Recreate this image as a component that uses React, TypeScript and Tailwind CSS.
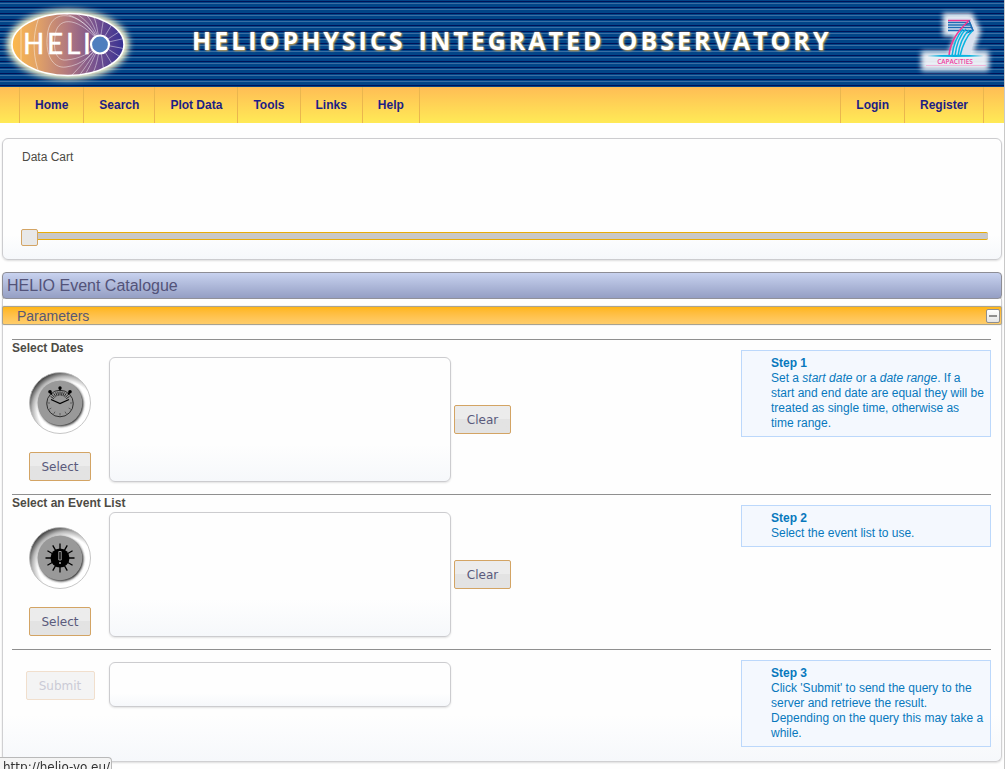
import React, { useState } from "react";

const GRADIENT_BUTTON =
  "rounded-xs border border-[#d3a464] bg-linear-to-b from-[#ececec] from-50% to-[#e3e3e3] to-50% font-['DejaVu_Sans',sans-serif] text-xs text-[#5a5a7c]";
const FIELD =
  "block w-[342px] resize-none rounded-md border border-[#cccccf] bg-linear-to-b from-[#fefefe] from-70% to-[#f6f8fb] shadow-[0_1px_2px_#e2e2e2] outline-none";

function HelioLogo() {
  const lines = [
    "M21 12V74", "M41 12C32 30 32 56 40 74",
    "M100 43C88 16 54 2 48 30C44 52 52 68 66 66C82 64 92 54 100 43",
    "M100 43C86 22 62 12 56 30C52 48 56 60 66 59C80 58 90 52 100 43",
    "M100 43C90 26 80 16 62 12", "M100 43C94 28 88 20 74 11",
    "M100 43C96 30 92 18 84 12", "M100 43C97 30 97 20 92 13",
    "M100 43C101 30 103 24 104 14", "M100 43L114 20", "M100 43L122 29", "M100 43L126 37",
    "M100 43L126 48", "M100 43L122 57", "M100 43L114 66", "M100 43L104 72",
    "M100 43C98 58 96 66 92 74", "M100 43C94 56 90 66 84 75",
    "M100 43C92 56 86 66 78 76", "M100 43C90 54 82 64 70 76",
  ];
  return (
    <svg viewBox="0 0 136 86" className="h-[86px] w-[136px]" role="img" aria-label="HELIO">
      <defs>
        <linearGradient id="sun">
          <stop offset="0" stopColor="#fdb94a" />
          <stop offset=".22" stopColor="#e3a366" />
          <stop offset=".5" stopColor="#b1787f" />
          <stop offset=".75" stopColor="#74508f" />
          <stop offset="1" stopColor="#353093" />
        </linearGradient>
        <filter id="halo" x="-20%" y="-30%" width="140%" height="160%">
          <feGaussianBlur stdDeviation="3" />
        </filter>
        <clipPath id="oval"><ellipse cx="68" cy="43.500" rx="56" ry="31" /></clipPath>
      </defs>
      <ellipse cx="68" cy="43.500" rx="61" ry="35" fill="#fffbd0" filter="url(#halo)" />
      <ellipse cx="68" cy="43.500" rx="56" ry="31" fill="url(#sun)" stroke="#fff" strokeWidth="1.600" />
      <g clipPath="url(#oval)" fill="none" stroke="#fff" strokeOpacity=".5" strokeWidth=".9">
        {lines.map((d) => <path key={d} d={d} />)}
      </g>
      <text x="23 47 66 83" y="53" fontFamily="Lato, sans-serif" fontSize="28" fill="#fff" stroke="#fff" strokeWidth=".4">HELI</text>
      <circle cx="100" cy="43.500" r="9" fill="#4f7fbe" stroke="#fff" strokeWidth="2.200" />
    </svg>
  );
}

function CapacitiesLogo() {
  return (
    <svg viewBox="0 0 80 78" className="h-[78px] w-20" role="img" aria-label="Capacities">
      <defs>
        <filter id="mist" x="-30%" y="-30%" width="160%" height="160%">
          <feGaussianBlur stdDeviation="2.500" />
        </filter>
      </defs>
      <g fill="#fff" opacity=".9" filter="url(#mist)">
        <path d="M28 8H57L66 26L57 50H32L40 31H28Z" />
        <rect x="6" y="46" width="68" height="20" rx="3" />
      </g>
      <path d="M33 13H57L62 24L55 50H36L44 29H33Z" fill="#d9e1ef" />
      <g fill="none">
        <path d="M33 17.500H53M33 20H55M33 22.500H57M33 25.500H58" stroke="#1d6db5" strokeWidth="1.500" />
        <path d="M49 20L55 18L58 25.500L51 28" stroke="#1d6db5" strokeWidth="1.400" />
        <path d="M48 24C41 32 38 42 37 51M51 24C43 32 41 42 40 51M54 25C46 33 44 42 43 51M58 25C50 33 47 42 45 51" stroke="#09b4e0" strokeWidth="1.500" />
        <path d="M33 15.500H54C43 26 35 36 34 51" stroke="#ee3a94" strokeWidth="1.600" />
        <path d="M54 15.500L58 25.500" stroke="#1d6db5" strokeWidth="1.300" />
      </g>
      <path d="M12 51Q40 48.500 69 51Q40 53 12 51Z" fill="#09b4e0" />
      <text x="40" y="58.500" textAnchor="middle" fontFamily="Open Sans, sans-serif" fontSize="6.500" fontWeight="600" fill="#f03ca0">CAPACITIES</text>
      <path d="M11 60.500H71" stroke="#f5a7d2" strokeWidth=".8" />
    </svg>
  );
}

function Dial({ id, children }: { id: string; children: React.ReactNode }) {
  return (
    <svg viewBox="0 0 64 64" className="size-16" aria-hidden="true">
      <defs>
        <radialGradient id={id + "-rim"} cx=".6" cy=".62" r=".66">
          <stop offset=".7" stopColor="#fff" />
          <stop offset=".84" stopColor="#b5b5b5" />
          <stop offset="1" stopColor="#303030" />
        </radialGradient>
        <filter id={id + "-blur"} x="-20%" y="-20%" width="140%" height="140%"><feGaussianBlur stdDeviation="1.200" /></filter>
      </defs>
      <circle cx="32" cy="32" r="30.500" fill={"url(#" + id + "-rim)"} stroke="#b8b8b8" strokeWidth=".8" />
      <circle cx="33" cy="33" r="22.500" fill="#333" filter={"url(#" + id + "-blur)"} />
      <circle cx="32" cy="32" r="22.300" fill="#999" />
      {children}
    </svg>
  );
}

const spokes = (count: number, from: number, to: number, start = 0, step = 360 / count) =>
  Array.from({ length: count }, (_, i) => {
    const a = ((start + i * step) * Math.PI) / 180;
    return `M${32 + from * Math.cos(a)} ${32 + from * Math.sin(a)}L${32 + to * Math.cos(a)} ${32 + to * Math.sin(a)}`;
  }).join("");

function ClockDial() {
  return (
    <Dial id="clock">
      <circle cx="32" cy="32.500" r="13.300" fill="none" stroke="#222" strokeWidth=".9" />
      <path d={spokes(7, 10, 12.5, 0, 30)} stroke="#333" strokeWidth=".6" />
      <path d={spokes(11, 7.5, 11.5, -145, 11)} stroke="#111" strokeWidth=".8" />
      <path d="M23 28.500L32 32.500L41 28.500" fill="none" stroke="#000" strokeWidth="1.300" />
      <path d="M32 17V19.500M22 21L24 23.500M42 21L40 23.500" stroke="#000" strokeWidth="1.500" />
      <circle cx="32" cy="17" r="1.700" /><circle cx="22" cy="20.800" r="1.800" /><circle cx="42" cy="20.800" r="1.800" />
    </Dial>
  );
}

function EventDial() {
  return (
    <Dial id="event">
      <path d={spokes(12, 8, 14.5)} stroke="#000" strokeWidth="1.300" />
      <circle cx="32" cy="32" r="9.500" />
      <path d="M30.800 25.500H33.200V34H30.800Z" fill="#000" stroke="#aaa" strokeWidth=".9" />
      <circle cx="32" cy="37" r="1" fill="#aaa" />
    </Dial>
  );
}

function NavLink({ children, first }: { children: string; first?: boolean }) {
  return (
    <a
      href="#"
      className={"flex items-center border-r border-[#eab64e] px-[15px] pb-px " + (first ? "border-l" : "")}
    >
      {children}
    </a>
  );
}

function Step({ title, children }: { title: string; children: React.ReactNode }) {
  return (
    <aside className="mt-[10px] ml-auto w-[250px] self-start border border-[#bcd8fb] bg-[#f4f8fe] py-[5px] pr-[5px] pl-[29px] leading-[15px] text-[#0878bd]">
      <h3 className="font-bold">{title}</h3>
      <p>{children}</p>
    </aside>
  );
}

function Picker({ title, id, icon, children }: { title: string; id: string; icon: React.ReactNode; children: React.ReactNode }) {
  const [value, setValue] = useState("");
  return (
    <section className="flex border-t border-[#8f8f8f] pb-3">
      <div>
        <label htmlFor={id} className="block leading-[17px] font-bold text-[#4d4b45]">{title}</label>
        <div className="flex">
          <div className="mr-px flex w-24 flex-col items-center pt-[14px]">
            {icon}
            <button type="button" className={"mt-[17px] h-[29px] w-[62px] " + GRADIENT_BUTTON}>Select</button>
          </div>
          <textarea id={id} readOnly value={value} className={"h-[125px] " + FIELD} />
          <button type="button" onClick={() => setValue("")} className={"ml-[3px] h-[29px] w-[57px] self-center " + GRADIENT_BUTTON}>
            Clear
          </button>
        </div>
      </div>
      {children}
    </section>
  );
}

export default function App() {
  return (
    <div className="border-r border-[#c8c8c8] bg-[#fefefe] pb-2 font-['Liberation_Sans',Arial,sans-serif] text-xs text-[#4d4b45]">
      <header className="flex h-[87px] items-center bg-[repeating-linear-gradient(to_bottom,#024588_0px,#024588_1px,#011257_1px,#011257_2px,#024588_2px,#024588_3px,#3a6da3_3px,#3a6da3_4px,#024588_4px,#024588_6px)] pr-[9px]">
        <HelioLogo />
        <h1 className="mr-auto ml-14 flex gap-[13px] pb-[7px] font-['Open_Sans',sans-serif] text-[25px] leading-8 font-bold tracking-[3px] whitespace-nowrap text-white [text-shadow:0_0_2px_#c9a75a,1px_1px_2px_#b89a5a]">
          <span>HELIOPHYSICS</span> <span>INTEGRATED</span> <span>OBSERVATORY</span>
        </h1>
        <CapacitiesLogo />
      </header>
      <nav className="flex h-9 justify-between bg-linear-to-b from-[#ffbd55] to-[#ffea56] pr-5 pl-[19px] font-bold text-[#1d1d85]">
        <div className="flex">
          <NavLink first>Home</NavLink>
          <NavLink>Search</NavLink>
          <NavLink>Plot Data</NavLink>
          <NavLink>Tools</NavLink>
          <NavLink>Links</NavLink>
          <NavLink>Help</NavLink>
        </div>
        <div className="flex">
          <NavLink first>Login</NavLink>
          <NavLink>Register</NavLink>
        </div>
      </nav>

      <main className="px-[2px] pt-[15px]">
        <section className="rounded-md border border-[#cccccf] bg-linear-to-b from-[#fefefe] from-80% to-[#f6f8fb] px-[18px] pt-[10px] pb-[15px] shadow-[0_1px_2px_#dddddd]">
          <label htmlFor="cart" className="block pl-px leading-4">Data Cart</label>
          <input
            id="cart"
            type="range"
            defaultValue={0}
            className="mt-[62px] block h-[17px] w-[calc(100%+5px)] appearance-none bg-transparent outline-none [&::-webkit-slider-runnable-track]:h-2 [&::-webkit-slider-runnable-track]:rounded-xs [&::-webkit-slider-runnable-track]:border-y [&::-webkit-slider-runnable-track]:border-[#e8ac08] [&::-webkit-slider-runnable-track]:bg-[#c8c8c8] [&::-webkit-slider-thumb]:mt-[-4px] [&::-webkit-slider-thumb]:size-[17px] [&::-webkit-slider-thumb]:appearance-none [&::-webkit-slider-thumb]:rounded-xs [&::-webkit-slider-thumb]:border [&::-webkit-slider-thumb]:border-[#d3a464] [&::-webkit-slider-thumb]:bg-[#e8e8e8]"
          />
        </section>

        <section className="mt-3">
          <h2 className="flex h-[27px] items-center rounded-sm border border-[#8d8d95] bg-linear-to-b from-[#c8d2ef] to-[#959fc4] px-1 text-base text-[#535379] shadow-[0_1px_1px_#aaaaaa]">
            HELIO Event Catalogue
          </h2>
          <div className="rounded-b-md border border-t-0 border-[#d0d0d2] bg-linear-to-b from-[#fefefe] from-90% to-[#f6f8fb] pt-[7px] pb-[14px] shadow-[0_1px_2px_#dddddd]">
            <div className="-mx-px flex h-[19px] items-center justify-between rounded-xs border border-[#a9a391] bg-linear-to-b from-[#ffb511] to-[#ffcd6b] pl-[14px] shadow-[0_0_1px_#999999]">
              <h3 className="text-sm leading-4 text-[#585873]">Parameters</h3>
              <button
                type="button"
                aria-label="Collapse parameters"
                className="mr-px flex size-[14px] items-center justify-center rounded-xs border border-[#8f8f8f] bg-linear-to-b from-white to-[#e5e5e5]"
              >
                <span className="h-[2px] w-2 bg-[#8f8f8f]" />
              </button>
            </div>
            <div className="mt-[14px] mr-[10px] ml-[9px]">
              <Picker title="Select Dates" id="dates" icon={<ClockDial />}>
                <Step title="Step 1">
                  Set a <em>start date</em> or a <em>date range</em>. If a start and end date are equal they will be treated as single time, otherwise as time range.
                </Step>
              </Picker>
              <Picker title="Select an Event List" id="events" icon={<EventDial />}>
                <Step title="Step 2">Select the event list to use.</Step>
              </Picker>
              <section className="flex items-start border-t border-[#8f8f8f]">
                <div className="mr-px flex w-24 justify-center pt-[21px]">
                  <button type="button" disabled className="h-[29px] w-[69px] rounded-xs border border-[#f1dfcd] bg-[#f4f4f4] font-['DejaVu_Sans',sans-serif] text-xs text-[#cbcbd6]">
                    Submit
                  </button>
                </div>
                <textarea aria-label="Query result" readOnly className={"mt-3 h-[45px] " + FIELD} />
                <Step title="Step 3">
                  Click 'Submit' to send the query to the server and retrieve the result. Depending on the query this may take a while.
                </Step>
              </section>
            </div>
          </div>
        </section>
      </main>

      <div className="fixed bottom-0 left-0 h-3 overflow-hidden rounded-tr-sm border-t border-r border-[#b9b9b9] bg-[#f4f4f4] pt-[2px] pr-px pl-[3px] font-['DejaVu_Sans',sans-serif] text-xs leading-[14px] text-[#333333]">
        http://helio-vo.eu/
      </div>
    </div>
  );
}
